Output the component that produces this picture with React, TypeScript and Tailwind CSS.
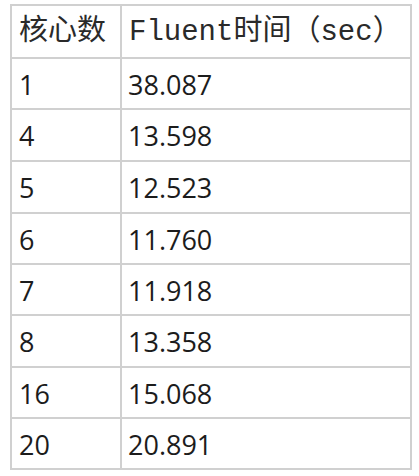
const rows = [
  { cores: "1", time: "38.087", h: "h-[51px]" },
  { cores: "4", time: "13.598", h: "h-[52px]" },
  { cores: "5", time: "12.523", h: "h-[52px]" },
  { cores: "6", time: "11.760", h: "h-[51px]" },
  { cores: "7", time: "11.918", h: "h-[51px]" },
  { cores: "8", time: "13.358", h: "h-[52px]" },
  { cores: "16", time: "15.068", h: "h-[51px]" },
  { cores: "20", time: "20.891", h: "h-[51px]" },
];

const headFont = { fontFamily: '"Liberation Mono", "Noto Sans CJK SC", monospace' };
const numFont = { fontFamily: '"Open Sans", "Liberation Sans", sans-serif' };

export default function App() {
  return (
    <div className="min-h-screen bg-white pt-[4px] pl-[10px]">
      <div className="w-[402px] border-l-2 border-t-2 border-[#d0d0d0] text-[#1c1c1c]">
        {/* header */}
        <div className="flex h-[53px]">
          <div
            className="w-[110px] flex items-center pl-[7px] pt-[3px] border-r-2 border-b-2 border-[#d0d0d0] text-[29px] text-[#2a2a2a]"
            style={headFont}
          >
            核心数
          </div>
          <div
            className="w-[290px] flex items-center pl-[7px] pt-[3px] border-r-2 border-b-2 border-[#d0d0d0] text-[29px] text-[#2a2a2a]"
            style={headFont}
          >
            Fluent时间（sec）
          </div>
        </div>

        {rows.map((r) => (
          <div key={r.cores} className={`flex ${r.h}`}>
            <div
              className="w-[110px] flex items-center pl-[7px] pt-[3px] border-r-2 border-b-2 border-[#d0d0d0] text-[27px]"
              style={numFont}
            >
              {r.cores}
            </div>
            <div
              className="w-[290px] flex items-center pl-[6px] pt-[3px] border-r-2 border-b-2 border-[#d0d0d0] text-[27px]"
              style={numFont}
            >
              {r.time}
            </div>
          </div>
        ))}
      </div>
    </div>
  );
}
